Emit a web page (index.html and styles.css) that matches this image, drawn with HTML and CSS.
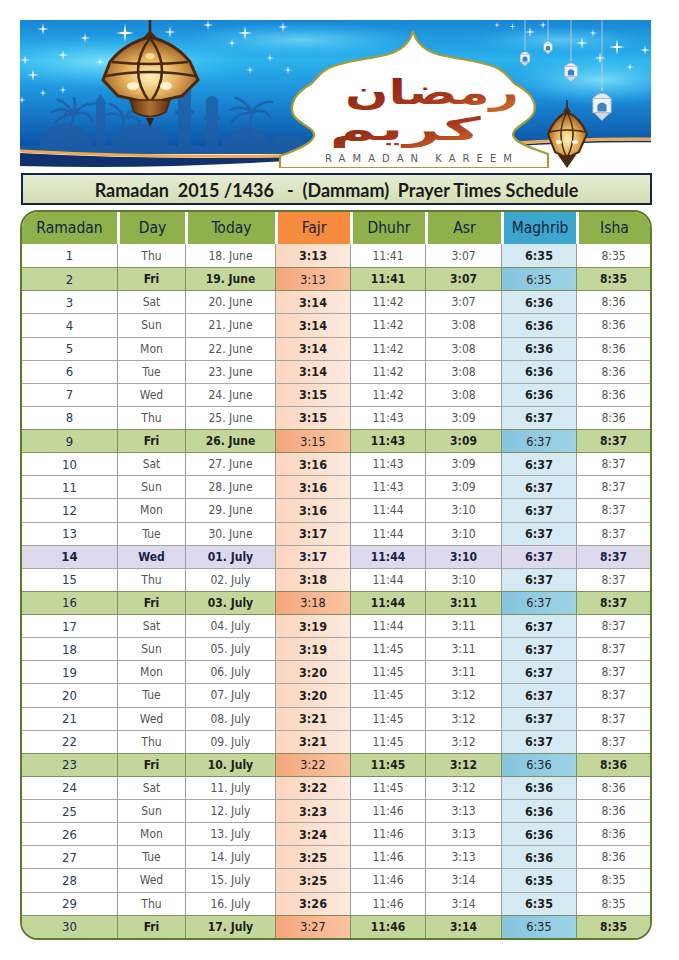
FILE: index.html
```html
<!DOCTYPE html>
<html>
<head>
<meta charset="utf-8">
<link rel="stylesheet" href="styles.css">
</head>
<body>
<div class="page">
  <div class="banner">
    <svg class="banner-art" viewBox="20 20 631 148" width="631" height="148" xmlns="http://www.w3.org/2000/svg">
      <defs>
        <linearGradient id="sky" x1="0" y1="0" x2="0" y2="1">
          <stop offset="0" stop-color="#1a86d6"/>
          <stop offset="0.3" stop-color="#2bb2ec"/>
          <stop offset="0.6" stop-color="#1a88d6"/>
          <stop offset="1" stop-color="#0c4a9c"/>
        </linearGradient>
        <radialGradient id="glow" cx="0.5" cy="0.5" r="0.5">
          <stop offset="0" stop-color="#9ff4ff" stop-opacity="0.95"/>
          <stop offset="1" stop-color="#3ad0ff" stop-opacity="0"/>
        </radialGradient>
        <radialGradient id="lamp" cx="0.5" cy="0.6" r="0.6">
          <stop offset="0" stop-color="#fff2c0"/>
          <stop offset="0.45" stop-color="#e6b45c"/>
          <stop offset="1" stop-color="#8a4a18"/>
        </radialGradient>
        <linearGradient id="brown" x1="0" y1="0" x2="1" y2="0">
          <stop offset="0" stop-color="#5a2e10"/>
          <stop offset="0.5" stop-color="#b07030"/>
          <stop offset="1" stop-color="#5a2e10"/>
        </linearGradient>
        <linearGradient id="cal" x1="0" y1="0" x2="1" y2="1">
          <stop offset="0" stop-color="#7a1c10"/>
          <stop offset="0.6" stop-color="#a8381a"/>
          <stop offset="1" stop-color="#d2742e"/>
        </linearGradient>
        <symbol id="st" viewBox="-10 -10 20 20">
          <path d="M0,-10 L1.4,-1.4 L10,0 L1.4,1.4 L0,10 L-1.4,1.4 L-10,0 L-1.4,-1.4 Z" fill="#ffffff"/>
        </symbol>
        <symbol id="sl" viewBox="0 0 20 26">
          <path d="M10,0 L10,2" stroke="#d0d8de" stroke-width="1"/>
          <path d="M3,8 Q10,0 17,8 Z" fill="#e4eaee" stroke="#aab4bc" stroke-width="0.6"/>
          <rect x="3" y="8" width="14" height="11" fill="#f0f4f6" stroke="#aab4bc" stroke-width="0.6"/>
          <path d="M6.5,18 V13 Q10,9 13.5,13 V18 Z" fill="#3a82c4"/>
          <path d="M4,19 L16,19 L10,25 Z" fill="#d4dbe0" stroke="#aab4bc" stroke-width="0.5"/>
        </symbol>
      </defs>

      <rect x="20" y="20" width="631" height="148" fill="#ffffff"/>
      <rect x="20" y="20" width="631" height="134" fill="url(#sky)"/>
      <ellipse cx="110" cy="62" rx="150" ry="28" fill="url(#glow)" opacity="0.75"/>
      <ellipse cx="300" cy="40" rx="130" ry="18" fill="url(#glow)" opacity="0.6"/>
      <ellipse cx="600" cy="80" rx="100" ry="26" fill="url(#glow)" opacity="0.75"/>
      <ellipse cx="560" cy="40" rx="90" ry="14" fill="url(#glow)" opacity="0.5"/>

      <!-- stars -->
      <use href="#st" x="37" y="23" width="12" height="12"/>
      <use href="#st" x="80" y="33" width="10" height="10"/>
      <use href="#st" x="116" y="24" width="18" height="18"/>
      <use href="#st" x="164" y="26" width="12" height="12"/>
      <use href="#st" x="203" y="20" width="10" height="10"/>
      <use href="#st" x="238" y="26" width="14" height="14"/>
      <use href="#st" x="228" y="39" width="8" height="8"/>
      <use href="#st" x="278" y="22" width="10" height="10"/>
      <use href="#st" x="20" y="55" width="10" height="10"/>
      <use href="#st" x="58" y="50" width="10" height="10"/>
      <use href="#st" x="27" y="69" width="12" height="12"/>
      <use href="#st" x="59" y="86" width="8" height="8"/>
      <use href="#st" x="39" y="89" width="8" height="8"/>
      <use href="#st" x="96" y="58" width="8" height="8"/>
      <use href="#st" x="246" y="66" width="8" height="8"/>
      <use href="#st" x="284" y="66" width="8" height="8"/>
      <use href="#st" x="266" y="54" width="8" height="8"/>
      <use href="#st" x="18" y="96" width="8" height="8"/>
      <use href="#st" x="525" y="27" width="10" height="10"/>
      <use href="#st" x="539" y="21" width="8" height="8"/>
      <use href="#st" x="576" y="37" width="12" height="12"/>
      <use href="#st" x="609" y="39" width="16" height="16"/>
      <use href="#st" x="594" y="52" width="12" height="12"/>
      <use href="#st" x="640" y="45" width="10" height="10"/>
      <use href="#st" x="589" y="29" width="8" height="8"/>
      <use href="#st" x="509" y="23" width="7" height="7"/>
      <use href="#st" x="494" y="22" width="6" height="6"/>
      <use href="#st" x="626" y="63" width="8" height="8"/>

      <!-- crescent moon -->
      <path d="M224,58 A31,31 0 0 0 276,92 A28,28 0 0 1 224,58 Z" fill="#ffffff" opacity="0.95"/>

      <!-- mosque silhouettes -->
      <g fill="#1f5ea6" opacity="0.8">
        <path d="M40,154 L40,138 Q66,108 92,138 L92,154 Z"/>
        <path d="M64,116 L66,108 L68,116 Z"/>
        <rect x="96" y="104" width="9" height="50"/>
        <path d="M94,104 L107,104 L100.5,94 Z"/>
        <path d="M112,154 L112,136 Q140,112 168,136 L168,154 Z"/>
        <rect x="178" y="92" width="13" height="62"/>
        <rect x="175" y="110" width="19" height="4"/>
        <path d="M177,92 Q184.5,80 192,92 Z"/>
        <rect x="206" y="102" width="12" height="52"/>
        <rect x="203" y="116" width="18" height="4"/>
        <path d="M205,102 Q212,90 219,102 Z"/>
        <path d="M222,154 L222,140 Q246,116 270,140 L270,154 Z"/>
        <path d="M270,154 L270,142 Q288,126 306,142 L306,154 Z"/>
        <rect x="20" y="146" width="300" height="8"/>
      </g>
      <!-- palms -->
      <g stroke="#1f5ea6" stroke-width="2.5" fill="none" opacity="0.85" stroke-linecap="round">
        <path d="M72,150 Q70,130 74,114"/>
        <path d="M74,114 Q62,106 52,112 M74,114 Q66,102 58,100 M74,114 Q84,102 94,104 M74,114 Q88,110 92,120 M74,114 Q76,104 74,98 M74,114 Q58,116 54,124"/>
        <path d="M122,150 Q120,132 124,118"/>
        <path d="M124,118 Q112,110 104,116 M124,118 Q118,106 110,104 M124,118 Q134,106 144,108 M124,118 Q138,114 140,124"/>
        <path d="M250,146 Q248,128 252,112"/>
        <path d="M252,112 Q240,104 230,110 M252,112 Q244,100 236,98 M252,112 Q262,100 272,102 M252,112 Q266,108 270,118 M252,112 Q236,114 232,122"/>
      </g>

      <!-- bottom swooshes -->
      <path d="M20,152 Q170,160 330,156 L330,168 L20,168 Z" fill="#ffffff"/>
      <path d="M20,153 Q170,161 330,156 L330,158 Q170,170 20,166 Z" fill="#10306e"/>
      <path d="M20,151 Q170,159 330,155" fill="none" stroke="#f2a94a" stroke-width="3"/>
      <path d="M490,146 Q570,139 651,140 L651,168 L490,168 Z" fill="#ffffff"/>
      <path d="M490,145 Q570,138 651,139" fill="none" stroke="#f2a94a" stroke-width="3"/>
      <path d="M490,147.5 Q570,140.5 651,141.5" fill="none" stroke="#10306e" stroke-width="1.5"/>

      <!-- white arch -->
      <path d="M413,31 C410,43 401,51 386,55 C364,60 342,61 327,69 C318,74 316,80 311,84 C296,92 289,104 293,114 C297,124 316,128 314,136 C312,144 296,150 280,156 L280,168 L548,168 L548,154 C530,148 514,142 513,135 C512,127 531,122 534,112 C537,102 530,92 515,84 C510,80 508,74 499,69 C484,61 462,60 440,55 C425,51 416,43 413,31 Z" fill="#ffffff" stroke="#a89a34" stroke-width="2.2"/>

      <!-- calligraphy -->
      <g font-family="'DejaVu Sans', sans-serif" font-weight="bold" fill="url(#cal)">
        <text x="0" y="0" font-size="34" text-anchor="middle" transform="translate(432,104) scale(1.5,1)">رمضان</text>
        <text x="0" y="0" font-size="32" text-anchor="middle" transform="translate(405,140) scale(2,1)">كريم</text>
      </g>
      <text x="325" y="162" font-family="'DejaVu Sans', sans-serif" font-size="10" fill="#5a5a5a" textLength="187" lengthAdjust="spacing">RAMADAN KAREEM</text>

      <!-- hanging silver lanterns -->
      <g stroke="#c8d2da" stroke-width="0.8">
        <line x1="525" y1="20" x2="525" y2="50"/>
        <line x1="548" y1="20" x2="548" y2="40"/>
        <line x1="571" y1="20" x2="571" y2="60"/>
        <line x1="602" y1="20" x2="602" y2="90"/>
      </g>
      <use href="#sl" x="518" y="49" width="14" height="18"/>
      <use href="#sl" x="542" y="39" width="12" height="16"/>
      <use href="#sl" x="562" y="59" width="18" height="24"/>
      <use href="#sl" x="589" y="88" width="26" height="34"/>

      <!-- main lantern -->
      <line x1="150" y1="20" x2="150" y2="36" stroke="#3a2410" stroke-width="2.5"/>
      <path d="M143,38 L157,38 L150,30 Z" fill="#4a2a10"/>
      <path d="M150,37 C134,41 120,49 110,62 L103,80 L118,96 L150,103 L182,96 L198,80 L190,62 C180,49 166,41 150,37 Z" fill="url(#lamp)" stroke="#4a2810" stroke-width="3"/>
      <g stroke="#4a2810" stroke-width="2.5" fill="none">
        <path d="M150,38 Q126,70 150,103"/>
        <path d="M150,38 Q174,70 150,103"/>
        <path d="M106,76 Q150,68 195,76"/>
        <path d="M112,62 Q150,66 188,62"/>
      </g>
      <ellipse cx="133" cy="86" rx="6" ry="4" fill="#fff6dc" opacity="0.9"/>
      <ellipse cx="166" cy="86" rx="6" ry="4" fill="#fff6dc" opacity="0.9"/>
      <ellipse cx="150" cy="56" rx="5" ry="3" fill="#f8e2a8" opacity="0.9"/>
      <path d="M130,100 L170,100 L166,112 Q150,121 134,112 Z" fill="url(#brown)" stroke="#4a2810" stroke-width="1.5"/>
      <path d="M146,118 L154,118 L150,127 Z" fill="#3a2010"/>

      <!-- small brown lantern right -->
      <line x1="567" y1="100" x2="567" y2="110" stroke="#3a2410" stroke-width="1.5"/>
      <path d="M563,112 L571,112 L567,106 Z" fill="#4a2a10"/>
      <path d="M567,112 C558,116 552,124 548,134 L555,152 L567,158 L579,152 L587,134 C583,124 576,116 567,112 Z" fill="url(#lamp)" stroke="#4a2810" stroke-width="2"/>
      <g stroke="#4a2810" stroke-width="1.5" fill="none">
        <path d="M567,112 Q555,134 567,158"/>
        <path d="M567,112 Q579,134 567,158"/>
        <path d="M549,132 Q567,128 586,132"/>
      </g>
      <ellipse cx="559" cy="142" rx="3" ry="2" fill="#fff6dc"/>
      <ellipse cx="575" cy="142" rx="3" ry="2" fill="#fff6dc"/>
      <path d="M558,155 L576,155 L567,168 Z" fill="#4a2810"/>
    </svg>
  </div>

  <div class="title">Ramadan  2015 /1436   -  (Dammam)  Prayer Times Schedule</div>

  <div class="frame">
    <div class="hrow">
      <div class="h">Ramadan</div>
      <div class="h">Day</div>
      <div class="h">Today</div>
      <div class="h h-fajr">Fajr</div>
      <div class="h">Dhuhr</div>
      <div class="h">Asr</div>
      <div class="h h-magh">Maghrib</div>
      <div class="h">Isha</div>
    </div>
    <div class="row first"><span class="c n">1</span><span class="c">Thu</span><span class="c">18. June</span><span class="c fj">3:13</span><span class="c">11:41</span><span class="c">3:07</span><span class="c mg">6:35</span><span class="c">8:35</span></div>
    <div class="row fri"><span class="c n">2</span><span class="c">Fri</span><span class="c">19. June</span><span class="c fj">3:13</span><span class="c">11:41</span><span class="c">3:07</span><span class="c mg">6:35</span><span class="c">8:35</span></div>
    <div class="row"><span class="c n">3</span><span class="c">Sat</span><span class="c">20. June</span><span class="c fj">3:14</span><span class="c">11:42</span><span class="c">3:07</span><span class="c mg">6:36</span><span class="c">8:36</span></div>
    <div class="row"><span class="c n">4</span><span class="c">Sun</span><span class="c">21. June</span><span class="c fj">3:14</span><span class="c">11:42</span><span class="c">3:08</span><span class="c mg">6:36</span><span class="c">8:36</span></div>
    <div class="row"><span class="c n">5</span><span class="c">Mon</span><span class="c">22. June</span><span class="c fj">3:14</span><span class="c">11:42</span><span class="c">3:08</span><span class="c mg">6:36</span><span class="c">8:36</span></div>
    <div class="row"><span class="c n">6</span><span class="c">Tue</span><span class="c">23. June</span><span class="c fj">3:14</span><span class="c">11:42</span><span class="c">3:08</span><span class="c mg">6:36</span><span class="c">8:36</span></div>
    <div class="row"><span class="c n">7</span><span class="c">Wed</span><span class="c">24. June</span><span class="c fj">3:15</span><span class="c">11:42</span><span class="c">3:08</span><span class="c mg">6:36</span><span class="c">8:36</span></div>
    <div class="row"><span class="c n">8</span><span class="c">Thu</span><span class="c">25. June</span><span class="c fj">3:15</span><span class="c">11:43</span><span class="c">3:09</span><span class="c mg">6:37</span><span class="c">8:36</span></div>
    <div class="row fri"><span class="c n">9</span><span class="c">Fri</span><span class="c">26. June</span><span class="c fj">3:15</span><span class="c">11:43</span><span class="c">3:09</span><span class="c mg">6:37</span><span class="c">8:37</span></div>
    <div class="row"><span class="c n">10</span><span class="c">Sat</span><span class="c">27. June</span><span class="c fj">3:16</span><span class="c">11:43</span><span class="c">3:09</span><span class="c mg">6:37</span><span class="c">8:37</span></div>
    <div class="row"><span class="c n">11</span><span class="c">Sun</span><span class="c">28. June</span><span class="c fj">3:16</span><span class="c">11:43</span><span class="c">3:09</span><span class="c mg">6:37</span><span class="c">8:37</span></div>
    <div class="row"><span class="c n">12</span><span class="c">Mon</span><span class="c">29. June</span><span class="c fj">3:16</span><span class="c">11:44</span><span class="c">3:10</span><span class="c mg">6:37</span><span class="c">8:37</span></div>
    <div class="row"><span class="c n">13</span><span class="c">Tue</span><span class="c">30. June</span><span class="c fj">3:17</span><span class="c">11:44</span><span class="c">3:10</span><span class="c mg">6:37</span><span class="c">8:37</span></div>
    <div class="row mid"><span class="c n">14</span><span class="c">Wed</span><span class="c">01. July</span><span class="c fj">3:17</span><span class="c">11:44</span><span class="c">3:10</span><span class="c mg">6:37</span><span class="c">8:37</span></div>
    <div class="row"><span class="c n">15</span><span class="c">Thu</span><span class="c">02. July</span><span class="c fj">3:18</span><span class="c">11:44</span><span class="c">3:10</span><span class="c mg">6:37</span><span class="c">8:37</span></div>
    <div class="row fri"><span class="c n">16</span><span class="c">Fri</span><span class="c">03. July</span><span class="c fj">3:18</span><span class="c">11:44</span><span class="c">3:11</span><span class="c mg">6:37</span><span class="c">8:37</span></div>
    <div class="row"><span class="c n">17</span><span class="c">Sat</span><span class="c">04. July</span><span class="c fj">3:19</span><span class="c">11:44</span><span class="c">3:11</span><span class="c mg">6:37</span><span class="c">8:37</span></div>
    <div class="row"><span class="c n">18</span><span class="c">Sun</span><span class="c">05. July</span><span class="c fj">3:19</span><span class="c">11:45</span><span class="c">3:11</span><span class="c mg">6:37</span><span class="c">8:37</span></div>
    <div class="row"><span class="c n">19</span><span class="c">Mon</span><span class="c">06. July</span><span class="c fj">3:20</span><span class="c">11:45</span><span class="c">3:11</span><span class="c mg">6:37</span><span class="c">8:37</span></div>
    <div class="row"><span class="c n">20</span><span class="c">Tue</span><span class="c">07. July</span><span class="c fj">3:20</span><span class="c">11:45</span><span class="c">3:12</span><span class="c mg">6:37</span><span class="c">8:37</span></div>
    <div class="row"><span class="c n">21</span><span class="c">Wed</span><span class="c">08. July</span><span class="c fj">3:21</span><span class="c">11:45</span><span class="c">3:12</span><span class="c mg">6:37</span><span class="c">8:37</span></div>
    <div class="row"><span class="c n">22</span><span class="c">Thu</span><span class="c">09. July</span><span class="c fj">3:21</span><span class="c">11:45</span><span class="c">3:12</span><span class="c mg">6:37</span><span class="c">8:37</span></div>
    <div class="row fri"><span class="c n">23</span><span class="c">Fri</span><span class="c">10. July</span><span class="c fj">3:22</span><span class="c">11:45</span><span class="c">3:12</span><span class="c mg">6:36</span><span class="c">8:36</span></div>
    <div class="row"><span class="c n">24</span><span class="c">Sat</span><span class="c">11. July</span><span class="c fj">3:22</span><span class="c">11:45</span><span class="c">3:12</span><span class="c mg">6:36</span><span class="c">8:36</span></div>
    <div class="row"><span class="c n">25</span><span class="c">Sun</span><span class="c">12. July</span><span class="c fj">3:23</span><span class="c">11:46</span><span class="c">3:13</span><span class="c mg">6:36</span><span class="c">8:36</span></div>
    <div class="row"><span class="c n">26</span><span class="c">Mon</span><span class="c">13. July</span><span class="c fj">3:24</span><span class="c">11:46</span><span class="c">3:13</span><span class="c mg">6:36</span><span class="c">8:36</span></div>
    <div class="row"><span class="c n">27</span><span class="c">Tue</span><span class="c">14. July</span><span class="c fj">3:25</span><span class="c">11:46</span><span class="c">3:13</span><span class="c mg">6:36</span><span class="c">8:36</span></div>
    <div class="row"><span class="c n">28</span><span class="c">Wed</span><span class="c">15. July</span><span class="c fj">3:25</span><span class="c">11:46</span><span class="c">3:14</span><span class="c mg">6:35</span><span class="c">8:35</span></div>
    <div class="row"><span class="c n">29</span><span class="c">Thu</span><span class="c">16. July</span><span class="c fj">3:26</span><span class="c">11:46</span><span class="c">3:14</span><span class="c mg">6:35</span><span class="c">8:35</span></div>
    <div class="row fri"><span class="c n">30</span><span class="c">Fri</span><span class="c">17. July</span><span class="c fj">3:27</span><span class="c">11:46</span><span class="c">3:14</span><span class="c mg">6:35</span><span class="c">8:35</span></div>
  </div>
</div>
</body>
</html>
```

FILE: styles.css
```css
html, body {
  margin: 0;
  padding: 0;
  background: #ffffff;
}

.page {
  width: 632px;
  padding: 20px 0 0 20px;
  font-family: "DejaVu Sans Condensed", "DejaVu Sans", sans-serif;
}

.banner {
  width: 631px;
  height: 148px;
}

.banner-art {
  display: block;
}

.title {
  margin-top: 5px;
  margin-left: 1px;
  width: 631px;
  height: 32px;
  box-sizing: border-box;
  border: 2px solid #16244a;
  background: linear-gradient(#e7edd4, #d4deb3);
  display: flex;
  align-items: center;
  justify-content: center;
  white-space: pre;
  font-family: "Lato", "DejaVu Sans", sans-serif;
  font-weight: bold;
  font-size: 18px;
  color: #1b1b1b;
  padding-top: 1px;
}

.frame {
  margin-top: 5px;
  width: 632px;
  box-sizing: border-box;
  border: 2px solid #5c7b2e;
  border-radius: 18px;
  overflow: hidden;
  background: #ffffff;
}

.hrow,
.row {
  display: grid;
  grid-template-columns: 95px 68px 90px 75px 75px 76px 75px 74px;
}

.hrow {
  height: 32px;
}

.h {
  display: flex;
  align-items: center;
  justify-content: center;
  background: #8fb04b;
  border-left: 3px solid #ffffff;
  font-size: 15.5px;
  color: #16243e;
  padding-bottom: 1px;
}

.h:first-child {
  border-left: none;
}

.h-fajr {
  background: #f68a3d;
}

.h-magh {
  background: #3ea6cc;
}

.row {
  height: 23.13px;
  box-sizing: border-box;
  border-top: 1px solid #a6a6a6;
}

.row.first {
  border-top: none;
}

.c {
  display: flex;
  align-items: center;
  justify-content: center;
  border-left: 1px solid #9d9d9d;
  font-size: 12px;
  color: #555555;
}

.c:first-child {
  border-left: none;
}

.c.n {
  color: #2c3a64;
  font-size: 13px;
}

.c.fj {
  background: linear-gradient(to right, #fbd6bf, #fdeadf);
  font-weight: bold;
  font-size: 12.5px;
  color: #1e1e1e;
}

.c.mg {
  background: #d6eaf4;
  font-weight: bold;
  font-size: 12.5px;
  color: #1e1e1e;
}

.row.fri {
  background: #c3d79b;
  border-top-color: #7f8f62;
}

.row.fri .c {
  color: #1e1e1e;
  font-weight: bold;
  border-left-color: #7f8f62;
}

.row.fri .c.n {
  color: #1e2a4a;
  font-weight: normal;
}

.row.fri .c.fj {
  background: linear-gradient(to right, #f5a77c, #f9c4a4);
  font-weight: normal;
}

.row.fri .c.mg {
  background: linear-gradient(to right, #86c5dd, #9ed2e5);
  font-weight: normal;
}

.row.fri + .row {
  border-top-color: #7f8f62;
}

.row.mid {
  background: #dcdaec;
}

.row.mid .c {
  color: #1a2244;
  font-weight: bold;
}

.row.mid .c.mg {
  background: #dcdaec;
}
```
